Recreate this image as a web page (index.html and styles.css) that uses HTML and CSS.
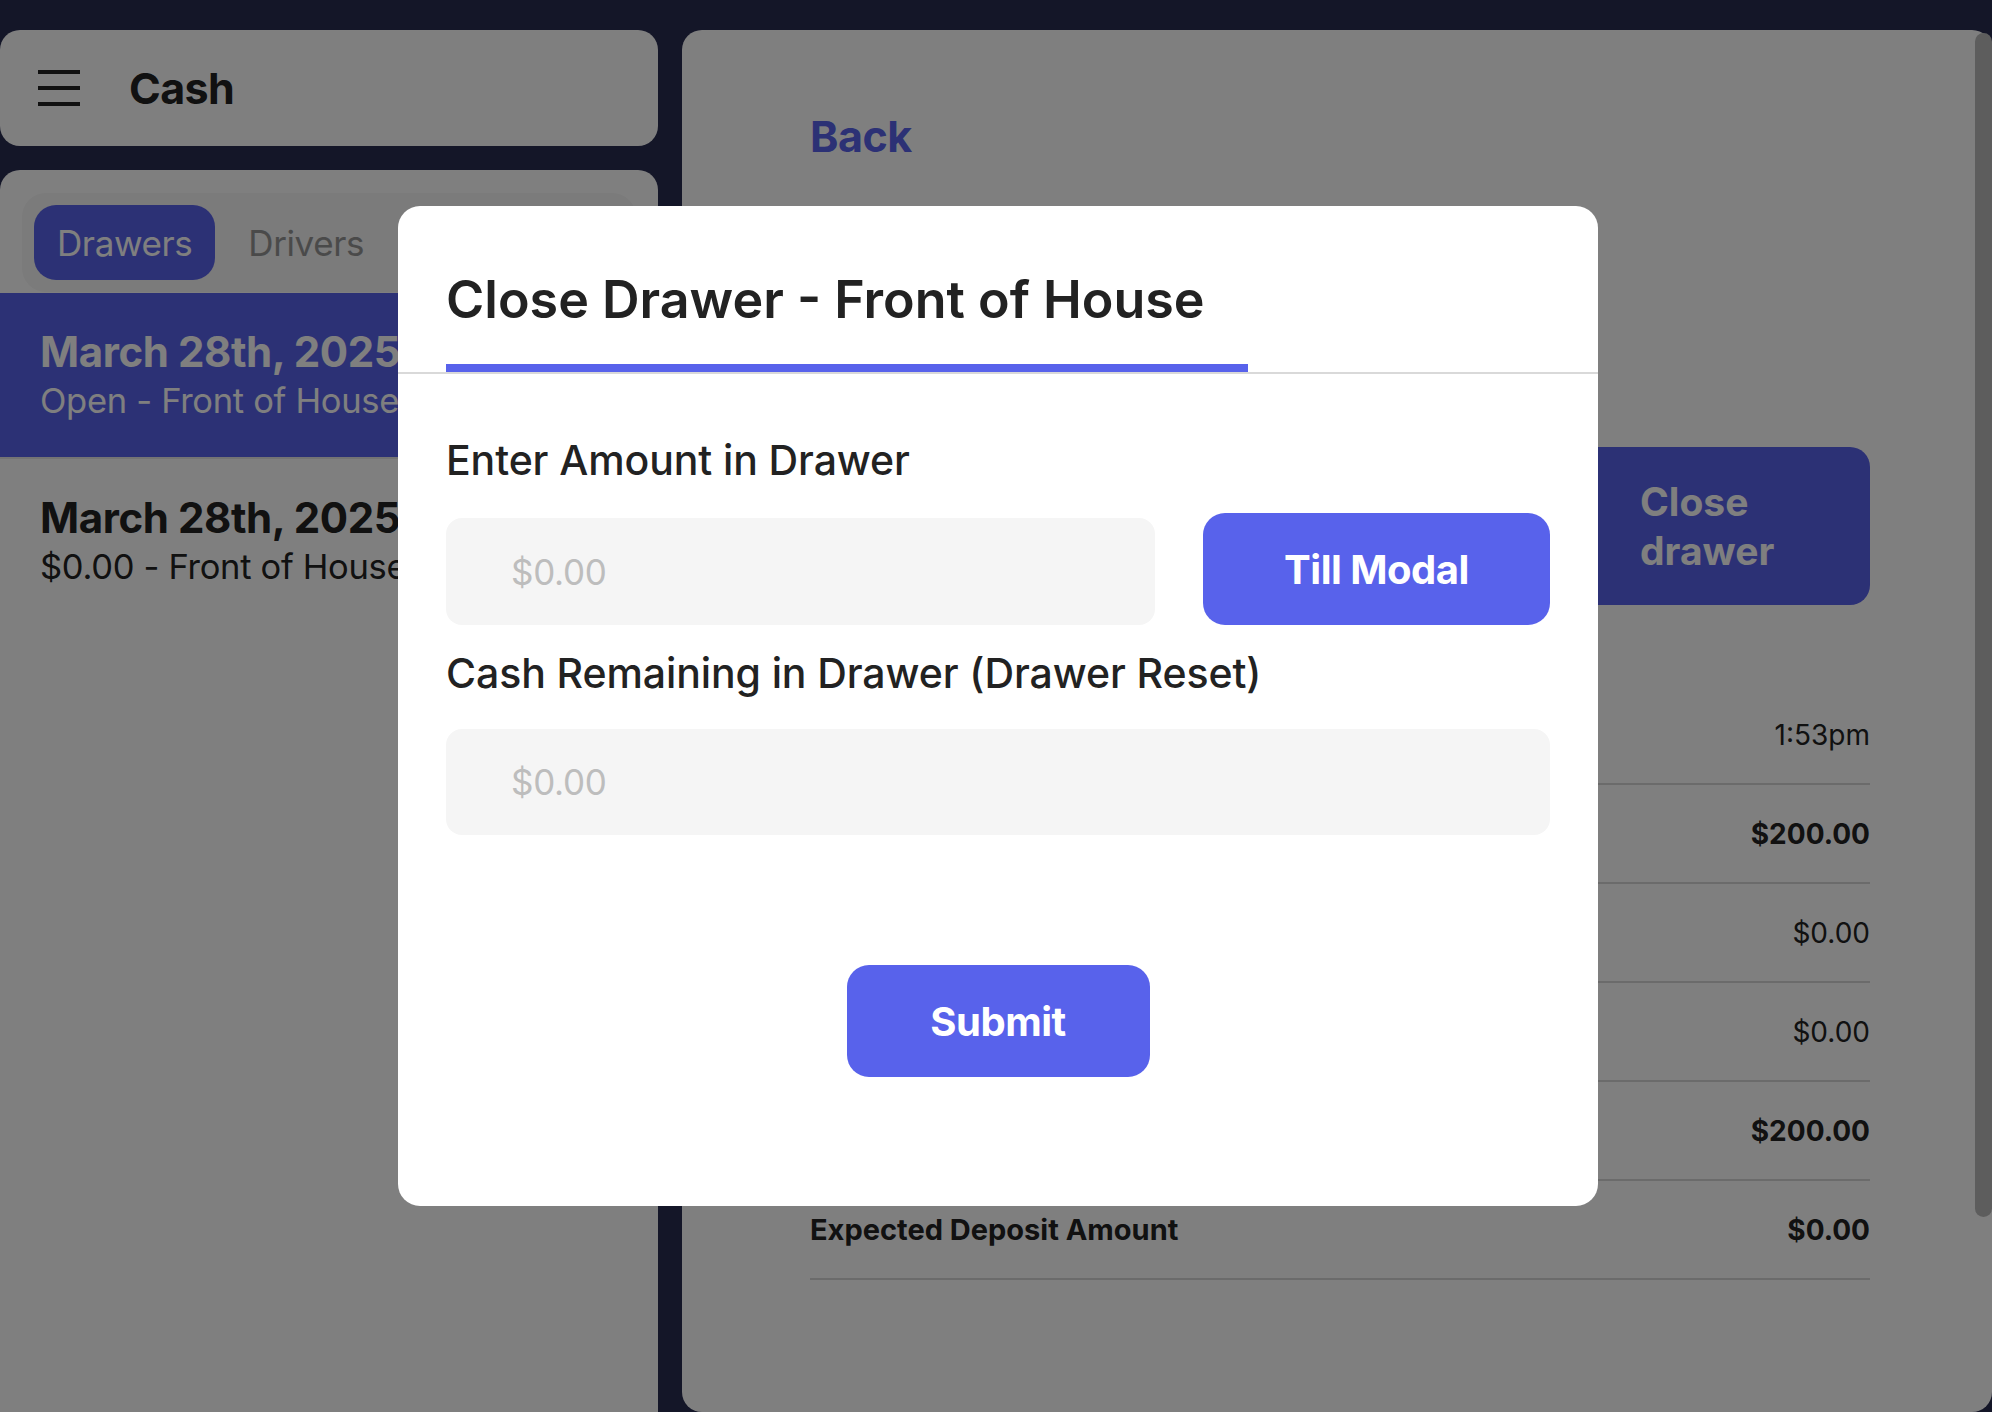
FILE: index.html
```html
<!DOCTYPE html>
<html lang="en">
<head>
<meta charset="utf-8">
<title>Cash</title>
<link rel="stylesheet" href="styles.css">
</head>
<body>
<div class="app">
  <aside class="sidebar">
    <header class="card sidebar-header">
      <svg class="menu-icon" width="42" height="36" viewBox="0 0 42 36" aria-hidden="true">
        <rect x="0" y="0" width="42" height="4"/>
        <rect x="0" y="16" width="42" height="4"/>
        <rect x="0" y="32" width="42" height="4"/>
      </svg>
      <h1 class="sidebar-title">Cash</h1>
    </header>
    <section class="card sidebar-list">
      <div class="segmented">
        <button class="seg seg-active">Drawers</button>
        <button class="seg">Drivers</button>
      </div>
      <ul class="drawer-list">
        <li class="drawer-item drawer-item-active">
          <div class="drawer-date">March 28th, 2025</div>
          <div class="drawer-meta">Open - Front of House</div>
        </li>
        <li class="drawer-item">
          <div class="drawer-date">March 28th, 2025</div>
          <div class="drawer-meta">$0.00 - Front of House</div>
        </li>
      </ul>
    </section>
  </aside>

  <main class="card detail">
    <a class="back">Back</a>
    <div class="detail-head">
      <button class="close-btn">Close drawer</button>
    </div>
    <div class="summary">
      <div class="row"><span class="row-label"></span><span class="row-value">1:53pm</span></div>
      <div class="row"><span class="row-label"></span><span class="row-value strong">$200.00</span></div>
      <div class="row"><span class="row-label"></span><span class="row-value">$0.00</span></div>
      <div class="row"><span class="row-label"></span><span class="row-value">$0.00</span></div>
      <div class="row"><span class="row-label"></span><span class="row-value strong">$200.00</span></div>
      <div class="row"><span class="row-label strong">Expected Deposit Amount</span><span class="row-value strong">$0.00</span></div>
    </div>
    <div class="scroll-thumb"></div>
  </main>
</div>

<div class="overlay">
  <div class="modal">
    <div class="modal-header">
      <h2 class="modal-tab">Close Drawer - Front of House</h2>
    </div>
    <div class="modal-body">
      <label class="field-label">Enter Amount in Drawer</label>
      <div class="field-row">
        <div class="field field-grow"><span class="placeholder">$0.00</span></div>
        <button class="btn btn-till">Till Modal</button>
      </div>
      <label class="field-label field-label-second">Cash Remaining in Drawer (Drawer Reset)</label>
      <div class="field"><span class="placeholder">$0.00</span></div>
      <div class="modal-actions">
        <button class="btn btn-submit">Submit</button>
      </div>
    </div>
  </div>
</div>
</body>
</html>
```

FILE: styles.css
```css
* { box-sizing: border-box; }

html, body {
  margin: 0;
  padding: 0;
  width: 1992px;
  height: 1412px;
  overflow: hidden;
}

body {
  background: #282c50;
  font-family: Inter, "Noto Sans", "Liberation Sans", sans-serif;
  color: #222;
}

h1, h2, ul, li { margin: 0; padding: 0; list-style: none; }

button {
  font-family: inherit;
  border: none;
  cursor: pointer;
}

.app {
  display: flex;
  gap: 24px;
  padding-top: 30px;
  height: 1412px;
}

.card {
  background: #fff;
  border-radius: 20px;
}

/* Sidebar */
.sidebar {
  width: 658px;
  flex: 0 0 658px;
  display: flex;
  flex-direction: column;
  gap: 24px;
}

.sidebar-header {
  height: 116px;
  display: flex;
  align-items: center;
  gap: 49px;
  padding-left: 38px;
}

.menu-icon { fill: #222; display: block; }

.sidebar-title {
  font-size: 43px;
  font-weight: 700;
  line-height: 52px;
  letter-spacing: -0.6px;
}

.sidebar-list {
  flex: 1;
  border-radius: 20px 20px 0 0;
  overflow: hidden;
  padding-top: 23px;
}

.segmented {
  margin: 0 22px;
  background: #f6f6f6;
  border-radius: 24px;
  padding: 12px;
  display: flex;
  gap: 10px;
}

.seg {
  height: 75px;
  padding: 0 23px;
  border-radius: 22px;
  background: transparent;
  font-size: 35px;
  font-weight: 400;
  color: #959595;
  letter-spacing: -0.4px;
}

.seg-active {
  background: #5862eb;
  color: #fff;
}

.drawer-list { margin-top: 1px; }

.drawer-item {
  padding: 34px 40px 32px;
  white-space: nowrap;
}

.drawer-item + .drawer-item {
  border-top: 2px solid #e8e8e8;
}

.drawer-item-active {
  background: #5862eb;
  color: #fff;
}

.drawer-date {
  font-size: 42px;
  font-weight: 700;
  line-height: 50px;
  letter-spacing: -0.4px;
}

.drawer-meta {
  font-size: 34.5px;
  line-height: 48px;
  letter-spacing: -0.3px;
}

/* Detail */
.detail {
  flex: 1;
  position: relative;
  padding: 80px 122px 0 128px;
}

.back {
  display: block;
  color: #5862eb;
  font-size: 43px;
  font-weight: 700;
  line-height: 52px;
  letter-spacing: -0.5px;
}

.detail-head {
  margin-top: 285px;
  display: flex;
  justify-content: flex-end;
  align-items: center;
}

.close-btn {
  width: 330px;
  padding: 30px 48px 30px 100px;
  border-radius: 20px;
  background: #5862eb;
  color: #fff;
  text-align: left;
  font-size: 39px;
  font-weight: 700;
  line-height: 49px;
}

.summary { margin-top: 81px; }

.row {
  height: 99px;
  border-bottom: 2px solid #d6d6d6;
  display: flex;
  justify-content: space-between;
  align-items: center;
  font-size: 28px;
  color: #222;
}

.row-label { font-size: 29px; }

.strong { font-weight: 700; }

.scroll-thumb {
  position: absolute;
  top: 3px;
  right: 0;
  width: 17px;
  height: 1184px;
  border-radius: 9px;
  background: #bbb;
}

/* Modal */
.overlay {
  position: fixed;
  inset: 0;
  background: rgba(0, 0, 0, 0.5);
  display: flex;
  align-items: center;
  justify-content: center;
  padding-left: 4px;
}

.modal {
  width: 1200px;
  height: 1000px;
  background: #fff;
  border-radius: 22px;
}

.modal-header {
  padding: 62px 48px 0;
  border-bottom: 2px solid #d9d9d9;
}

.modal-tab {
  display: inline-block;
  font-size: 52px;
  font-weight: 600;
  line-height: 64px;
  letter-spacing: 0;
  padding: 0 43px 32px 0;
  border-bottom: 8px solid #5862eb;
}

.modal-body { padding: 0 48px; }

.field-label {
  display: block;
  margin-top: 60px;
  font-size: 41px;
  font-weight: 500;
  line-height: 52px;
  letter-spacing: -0.1px;
}

.field-label-second { margin-top: 22px; margin-bottom: 30px; }

.field-row {
  margin-top: 27px;
  display: flex;
  align-items: flex-end;
  gap: 48px;
}

.field {
  height: 106px;
  border-radius: 16px;
  background: #f5f5f5;
  display: flex;
  align-items: center;
  padding-left: 65px;
}

.field-grow { flex: 1; height: 107px; }

.placeholder {
  font-size: 35px;
  color: #bdbdbd;
  letter-spacing: -0.3px;
}

.btn {
  height: 112px;
  border-radius: 22px;
  background: #5862eb;
  color: #fff;
  font-size: 40px;
  font-weight: 700;
  letter-spacing: -0.5px;
}

.btn-till { width: 347px; }

.modal-actions {
  display: flex;
  justify-content: center;
  margin-top: 130px;
}

.btn-submit { width: 303px; }
```
